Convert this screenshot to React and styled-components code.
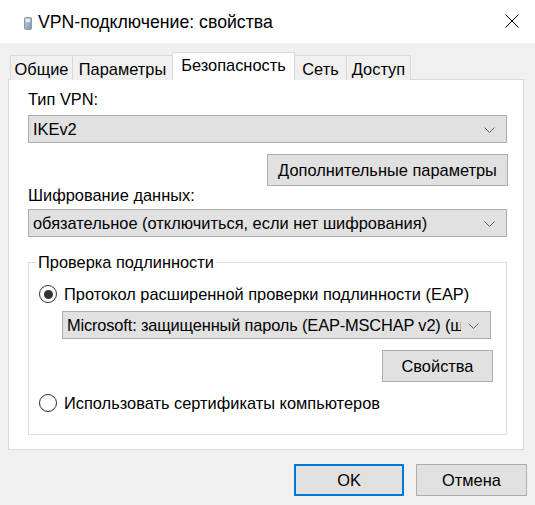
import React, { useState } from "react";
import styled, { createGlobalStyle } from "styled-components";

const GlobalStyle = createGlobalStyle`
	html, body {
		margin: 0;
		padding: 0;
		background: #f0f0f0;
	}
	* {
		box-sizing: border-box;
	}
`;

const Window = styled.div`
	width: 535px;
	height: 505px;
	display: flex;
	flex-direction: column;
	font-family: "Liberation Sans", Arial, sans-serif;
	font-size: 16.4px;
	color: #000000;
	overflow: hidden;
`;

const TitleBar = styled.div`
	height: 43px;
	flex-shrink: 0;
	display: flex;
	align-items: center;
	background: #ffffff;
	padding-left: 24px;
	padding-top: 3px;
`;

const Title = styled.span`
	font-size: 17.7px;
	margin-left: 6px;
	margin-top: -1px;
`;

const CloseButton = styled.button`
	margin-left: auto;
	width: 46px;
	height: 40px;
	border: 0;
	background: transparent;
	display: flex;
	align-items: center;
	justify-content: center;
	padding: 0;
	margin-top: -4px;
	cursor: pointer;
`;

const Body = styled.div`
	flex: 1;
	display: flex;
	flex-direction: column;
	padding: 10px 8px 9px 8px;
	background: #f0f0f0;
`;

const TabStrip = styled.div`
	display: flex;
	align-items: flex-end;
	padding-left: 2px;
	height: 27px;
	position: relative;
	z-index: 1;
	margin-bottom: -1px;
`;

const Tab = styled.div`
	width: ${({ width }) => width}px;
	height: ${({ active }) => (active ? 28 : 25)}px;
	margin-left: -1px;
	border: 1px solid #d9d9d9;
	border-bottom: ${({ active }) => (active ? "1px solid #ffffff" : "0")};
	background: ${({ active }) => (active ? "#ffffff" : "#f0f0f0")};
	display: flex;
	justify-content: center;
	padding-top: ${({ active }) => (active ? 3 : 4)}px;
	white-space: nowrap;
	&:first-child {
		margin-left: 0;
	}
`;

const Panel = styled.div`
	flex: 1;
	margin-right: 3px;
	background: #ffffff;
	border: 1px solid #d9d9d9;
	padding: 10px 16px 0 19px;
	display: flex;
	flex-direction: column;
`;

const Label = styled.div`
	line-height: 18px;
`;

const ComboBox = styled.div`
	height: 28px;
	margin-top: ${({ top }) => top}px;
	margin-left: ${({ indent }) => indent || 0}px;
	background: #e1e1e1;
	border: 1px solid #adadad;
	display: flex;
	align-items: center;
	padding-left: 4px;
	padding-right: 11px;
`;

const ComboText = styled.span`
	flex: 1;
	white-space: nowrap;
	overflow: hidden;
	letter-spacing: ${({ tight }) => (tight ? "-0.15px" : "normal")};
`;

const Chevron = styled.svg`
	flex-shrink: 0;
	margin-left: 7px;
	margin-top: 1px;
`;

const Button = styled.button`
	font-family: inherit;
	font-size: 16.4px;
	color: #000000;
	height: 32px;
	width: ${({ width }) => width}px;
	background: #e1e1e1;
	border: ${({ primary }) => (primary ? "2px solid #0078d7" : "1px solid #adadad")};
	padding: 0;
	cursor: pointer;
`;

const RightButton = styled(Button)`
	align-self: flex-end;
	margin-top: ${({ top }) => top}px;
	margin-right: ${({ shift }) => shift || 0}px;
`;

const GroupBox = styled.fieldset`
	margin: 16px 0 0 0;
	padding: 0 15px 21px 10px;
	border: 1px solid #dcdcdc;
	display: flex;
	flex-direction: column;
	min-width: 0;
`;

const Legend = styled.legend`
	padding: 0 2px;
	margin-left: -3px;
	line-height: 18px;
`;

const RadioRow = styled.label`
	display: flex;
	align-items: center;
	height: 20px;
	margin-top: ${({ top }) => top}px;
	cursor: pointer;
`;

const RadioCircle = styled.span`
	width: 18px;
	height: 18px;
	border-radius: 50%;
	border: 1.5px solid #333333;
	display: flex;
	align-items: center;
	justify-content: center;
	margin-right: 7px;
	flex-shrink: 0;
	&::after {
		content: "";
		width: 9px;
		height: 9px;
		border-radius: 50%;
		background: ${({ checked }) => (checked ? "#333333" : "transparent")};
	}
`;

const Footer = styled.div`
	display: flex;
	justify-content: flex-end;
	gap: 12px;
	padding-top: 14px;
`;

const tabs = [
	{ label: "Общие", width: 63 },
	{ label: "Параметры", width: 101 },
	{ label: "Безопасность", width: 123 },
	{ label: "Сеть", width: 53 },
	{ label: "Доступ", width: 65 },
];

const ChevronIcon = () => (
	<Chevron width="11" height="6" viewBox="0 0 11 6">
		<path d="M0.5 0.5 L5.5 5.5 L10.5 0.5" fill="none" stroke="#606060" strokeWidth="1" />
	</Chevron>
);

const VpnIcon = () => (
	<svg width="8" height="13" viewBox="0 0 8 13">
		<defs>
			<linearGradient id="vpnGrad" x1="0" y1="0" x2="1" y2="1">
				<stop offset="0" stopColor="#c9d6e3" />
				<stop offset="1" stopColor="#7e93a8" />
			</linearGradient>
		</defs>
		<rect x="0.5" y="0.5" width="7" height="12" rx="1" fill="url(#vpnGrad)" stroke="#8a9bab" />
		<rect x="2" y="2" width="4" height="3" fill="#e8eef4" />
	</svg>
);

const App = () => {
	const [activeTab] = useState("Безопасность");
	const [auth, setAuth] = useState("eap");

	return (
		<>
			<GlobalStyle />
			<Window>
				<TitleBar>
					<VpnIcon />
					<Title>VPN-подключение: свойства</Title>
					<CloseButton aria-label="Закрыть">
						<svg width="14" height="14" viewBox="0 0 14 14">
							<path d="M0.5 0.5 L13.5 13.5 M13.5 0.5 L0.5 13.5" stroke="#000" strokeWidth="1" />
						</svg>
					</CloseButton>
				</TitleBar>
				<Body>
					<TabStrip>
						{tabs.map(({ label, width }) => (
							<Tab key={label} width={width} active={label === activeTab}>
								{label}
							</Tab>
						))}
					</TabStrip>
					<Panel>
						<Label>Тип VPN:</Label>
						<ComboBox top={7}>
							<ComboText>IKEv2</ComboText>
							<ChevronIcon />
						</ComboBox>
						<RightButton width={241} top={11} shift={-1}>
							Дополнительные параметры
						</RightButton>
						<Label>Шифрование данных:</Label>
						<ComboBox top={5}>
							<ComboText>обязательное (отключиться, если нет шифрования)</ComboText>
							<ChevronIcon />
						</ComboBox>
						<GroupBox>
							<Legend>Проверка подлинности</Legend>
							<RadioRow top={13} onClick={() => setAuth("eap")}>
								<RadioCircle checked={auth === "eap"} />
								Протокол расширенной проверки подлинности (EAP)
							</RadioRow>
							<ComboBox top={7} indent={23}>
								<ComboText tight>
									Microsoft: защищенный пароль (EAP-MSCHAP v2) (шифрование включено)
								</ComboText>
								<ChevronIcon />
							</ComboBox>
							<RightButton width={111} top={11} shift={-2}>
								Свойства
							</RightButton>
							<RadioRow top={11} onClick={() => setAuth("cert")}>
								<RadioCircle checked={auth === "cert"} />
								Использовать сертификаты компьютеров
							</RadioRow>
						</GroupBox>
					</Panel>
					<Footer>
						<Button primary width={110}>
							OK
						</Button>
						<Button width={111}>Отмена</Button>
					</Footer>
				</Body>
			</Window>
		</>
	);
};

export default App;
